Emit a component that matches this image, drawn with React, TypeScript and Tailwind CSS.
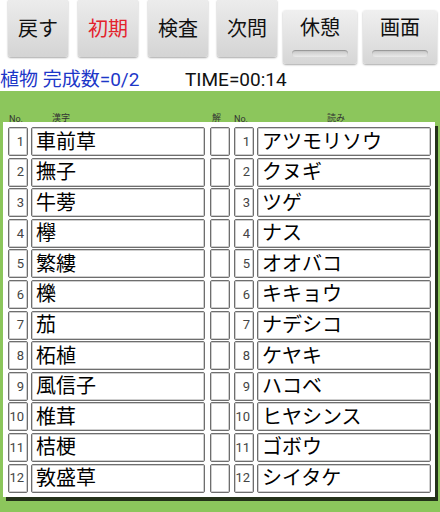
import React from 'react';

const KANJI = ['車前草', '撫子', '牛蒡', '欅', '繁縷', '櫟', '茄', '柘植', '風信子', '椎茸', '桔梗', '敦盛草'];
const YOMI = ['アツモリソウ', 'クヌギ', 'ツゲ', 'ナス', 'オオバコ', 'キキョウ', 'ナデシコ', 'ケヤキ', 'ハコベ', 'ヒヤシンス', 'ゴボウ', 'シイタケ'];

const FONT = "font-['Roboto','Noto_Sans_CJK_JP',sans-serif]";

const box = 'h-full rounded-[2px] border border-[#6e6e6e] bg-white shadow-[inset_0_0_0_1px_#cfcfcf]';

function TopButton({ label, red }: { label: string; red?: boolean }) {
  return (
    <button className="flex h-[57px] w-[60px] items-center justify-center rounded-b-[3px] bg-gradient-to-b from-[#ececec] to-[#d4d4d4] shadow-[0_1px_2px_rgba(0,0,0,0.35)]">
      <span className={`text-[20px] leading-none ${red ? 'text-[#e3232c]' : 'text-[#111]'}`}>{label}</span>
    </button>
  );
}

function ToggleButton({ label }: { label: string }) {
  return (
    <button className="flex h-[54px] w-[74px] flex-col items-center rounded-[3px] bg-gradient-to-b from-[#f0f0f0] to-[#d6d6d6] pt-[6px] shadow-[0_1px_2px_rgba(0,0,0,0.35)]">
      <span className="text-[20px] leading-[24px] text-[#111]">{label}</span>
      <span className="mt-[10px] h-[7px] w-[56px] rounded-full bg-gradient-to-b from-[#c4c4c4] to-[#eaeaea] shadow-[inset_0_1px_1px_rgba(0,0,0,0.25)]" />
    </button>
  );
}

export default function App() {
  return (
    <div className={`h-[512px] w-[440px] overflow-hidden bg-white ${FONT}`}>
      <div className="flex h-[68px] items-start pl-2">
        <TopButton label="戻す" />
        <div className="ml-[10px]"><TopButton label="初期" red /></div>
        <div className="ml-[10px]"><TopButton label="検査" /></div>
        <div className="ml-[9px]"><TopButton label="次問" /></div>
        <div className="ml-[6px] mt-[10px]"><ToggleButton label="休憩" /></div>
        <div className="ml-[6px] mt-[10px]"><ToggleButton label="画面" /></div>
      </div>

      <div className="flex h-[23px] items-center text-[19px] leading-none">
        <span className="w-[185px] text-[#1d37c8]">植物 完成数=0/2</span>
        <span className="text-[#111]">TIME=00:14</span>
      </div>

      <div className="h-[421px] bg-[#8cc65c] pr-[5px]">
        <div className="relative h-[31px] text-[9px] text-[#333]">
          <span className="absolute left-[9px] top-[22px]">No.</span>
          <span className="absolute left-[52px] top-[21px]">漢字</span>
          <span className="absolute left-[212px] top-[21px]">解</span>
          <span className="absolute left-[234px] top-[22px]">No.</span>
          <span className="absolute left-[327px] top-[21px]">読み</span>
        </div>
        <div className="ml-[3px] flex h-[375px] flex-col gap-[1.6px] bg-white pl-[5px] pt-[5px] shadow-[3px_4px_0_#243219]">
          {KANJI.map((k, i) => (
            <div key={i} className="flex h-[29px] shrink-0">
              <div className={`${box} flex w-[20px] items-center justify-end pr-[3px] text-[13px] text-[#444]`}>{i + 1}</div>
              <div className={`${box} ml-[3px] flex w-[174px] items-center pl-[4px] text-[20px] text-black`}>{k}</div>
              <div className={`${box} ml-[5px] w-[20px]`} />
              <div className={`${box} ml-[4px] flex w-[20px] items-center justify-end pr-[3px] text-[13px] text-[#444]`}>{i + 1}</div>
              <div className={`${box} ml-[3px] flex w-[174px] items-center pl-[4px] text-[20px] text-black`}>{YOMI[i]}</div>
            </div>
          ))}
        </div>
      </div>
    </div>
  );
}
